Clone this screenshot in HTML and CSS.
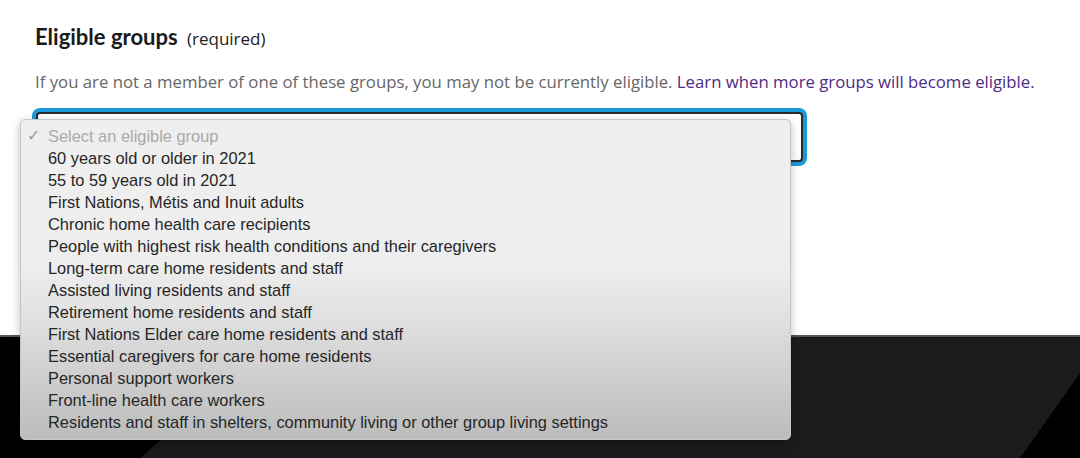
FILE: index.html
```html
<!DOCTYPE html>
<html lang="en">
<head>
    <meta charset="UTF-8">
    <title>Eligible groups</title>
    <link rel="stylesheet" href="styles.css">
</head>
<body>
    <div class="page">
        <div class="content">
            <h2 class="field-label">Eligible groups <span class="req">(required)</span></h2>
            <p class="hint">If you are not a member of one of these groups, you may not be currently eligible. <a href="#">Learn when more groups will become eligible.</a></p>
            <div class="select-wrap">
                <div class="select"></div>
                <ul class="menu">
                    <li class="placeholder"><span class="check">&#10003;</span>Select an eligible group</li>
                    <li>60 years old or older in 2021</li>
                    <li>55 to 59 years old in 2021</li>
                    <li>First Nations, Métis and Inuit adults</li>
                    <li>Chronic home health care recipients</li>
                    <li>People with highest risk health conditions and their caregivers</li>
                    <li>Long-term care home residents and staff</li>
                    <li>Assisted living residents and staff</li>
                    <li>Retirement home residents and staff</li>
                    <li>First Nations Elder care home residents and staff</li>
                    <li>Essential caregivers for care home residents</li>
                    <li>Personal support workers</li>
                    <li>Front-line health care workers</li>
                    <li>Residents and staff in shelters, community living or other group living settings</li>
                </ul>
            </div>
        </div>
        <footer class="footer"></footer>
    </div>
</body>
</html>
```

FILE: styles.css
```css
/* Basic styling */
body {
    margin: 0;
    padding: 0;
    font-family: 'Open Sans', sans-serif;
    background: #fff;
}

.page {
    height: 458px;
    display: flex;
    flex-direction: column;
    overflow: hidden;
}

.content {
    height: 335px;
    padding: 26px 0 0 35px;
    box-sizing: border-box;
    position: relative;
    z-index: 2;
}

.field-label {
    margin: 0;
    font-family: 'Lato', sans-serif;
    font-size: 22px;
    font-weight: 700;
    color: #1a1a1a;
    line-height: 22px;
}

.req {
    font-family: 'Open Sans', sans-serif;
    font-size: 17px;
    font-weight: 400;
    margin-left: 4px;
    color: #222;
}

.hint {
    margin: 20px 0 0;
    font-size: 16.75px;
    line-height: 24px;
    color: #666;
}

.hint a {
    color: #4e2a84;
    text-decoration: none;
}

.select-wrap {
    position: relative;
    margin-top: 18px;
    width: 768px;
}

.select {
    margin-left: 1px;
    height: 46px;
    border: 2px solid #2a2a2a;
    border-radius: 4px;
    background: #fff;
    box-shadow: 0 0 0 4px #1a9ad8;
}

/* open dropdown menu */
.menu {
    position: absolute;
    left: -15px;
    top: 7px;
    width: 771px;
    height: 321px;
    margin: 0;
    padding: 5px 0 0;
    list-style: none;
    box-sizing: border-box;
    border: 1px solid #c6c6c6;
    border-radius: 5px;
    background: linear-gradient(#efefef 0%, #eeeeee 45%, #e2e2e2 60%, #bcbcbc 100%);
    box-shadow: 0 3px 10px rgba(0, 0, 0, 0.25);
    font-family: 'Liberation Sans', Arial, sans-serif;
    font-size: 16.4px;
    color: #262626;
}

.menu li {
    height: 22px;
    line-height: 22px;
    padding-left: 27px;
    position: relative;
    white-space: nowrap;
}

.menu .placeholder {
    color: #aaa;
}

.check {
    position: absolute;
    left: 6px;
    color: #999;
    font-family: 'DejaVu Sans', sans-serif;
    font-size: 16px;
}

.footer {
    flex: 1;
    background: #1b1b1b;
    border-top: 2px solid #555;
    position: relative;
    z-index: 1;
}

.footer::before,
.footer::after {
    content: "";
    position: absolute;
    top: 0;
    bottom: 0;
    background: #000;
}

.footer::before {
    left: 0;
    width: 280px;
    clip-path: polygon(0 0, 100% 0, 140px 100%, 0 100%);
}

.footer::after {
    right: 0;
    width: 90px;
    clip-path: polygon(100% 30%, 100% 100%, 30px 100%);
}
```
